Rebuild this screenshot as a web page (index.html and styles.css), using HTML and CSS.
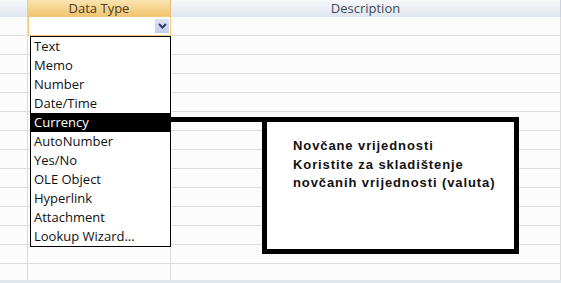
FILE: index.html
```html
<!DOCTYPE html>
<html lang="en">
<head>
  <meta charset="UTF-8">
  <title>Data Type</title>
  <link rel="stylesheet" href="styles.css">
</head>
<body>
  <div class="sheet">
    <div class="head">
      <div class="hcell corner"></div>
      <div class="hcell active">Data Type</div>
      <div class="hcell">Description</div>
    </div>

    <div class="row">
      <div class="cell"></div>
      <div class="cell current">
        <span class="drop">
          <svg width="9" height="6" viewBox="0 0 9 6"><path d="M1 1 L4.5 4.5 L8 1" fill="none" stroke="#2c3b6e" stroke-width="2"/></svg>
        </span>
      </div>
      <div class="cell"></div>
    </div>
    <div class="row"><div class="cell"></div><div class="cell"></div><div class="cell"></div></div>
    <div class="row"><div class="cell"></div><div class="cell"></div><div class="cell"></div></div>
    <div class="row"><div class="cell"></div><div class="cell"></div><div class="cell"></div></div>
    <div class="row"><div class="cell"></div><div class="cell"></div><div class="cell"></div></div>
    <div class="row"><div class="cell"></div><div class="cell"></div><div class="cell"></div></div>
    <div class="row"><div class="cell"></div><div class="cell"></div><div class="cell"></div></div>
    <div class="row"><div class="cell"></div><div class="cell"></div><div class="cell"></div></div>
    <div class="row"><div class="cell"></div><div class="cell"></div><div class="cell"></div></div>
    <div class="row"><div class="cell"></div><div class="cell"></div><div class="cell"></div></div>
    <div class="row"><div class="cell"></div><div class="cell"></div><div class="cell"></div></div>
    <div class="row"><div class="cell"></div><div class="cell"></div><div class="cell"></div></div>
    <div class="row"><div class="cell"></div><div class="cell"></div><div class="cell"></div></div>
    <div class="row last"><div class="cell"></div><div class="cell"></div><div class="cell"></div></div>
    <div class="footer"></div>

    <ul class="list">
      <li>Text</li>
      <li>Memo</li>
      <li>Number</li>
      <li>Date/Time</li>
      <li class="selected">Currency</li>
      <li>AutoNumber</li>
      <li>Yes/No</li>
      <li>OLE Object</li>
      <li>Hyperlink</li>
      <li>Attachment</li>
      <li>Lookup Wizard...</li>
    </ul>

    <div class="connector"></div>
    <div class="note">
      <p>Novčane vrijednosti</p>
      <p>Koristite za skladištenje</p>
      <p>novčanih vrijednosti (valuta)</p>
    </div>
  </div>
</body>
</html>
```

FILE: styles.css
```css
body {
  margin: 0;
  font-family: "Open Sans", "Noto Sans", sans-serif;
  background: #fcfcfc;
}
.sheet {
  position: relative;
  width: 561px;
  height: 283px;
  overflow: hidden;
}
.head, .row {
  display: grid;
  grid-template-columns: 28px 143px 1fr;
}
.head {
  height: 17px;
}
.hcell {
  background: linear-gradient(to bottom, #f7f9fb, #dfe5ee);
  border-right: 1px solid #c9d1dc;
  color: #3e4a5b;
  font-size: 13px;
  line-height: 17px;
  text-align: center;
}
.hcell.active {
  background: linear-gradient(to bottom, #fbe4b0, #f1c26c);
  border-right-color: #e8c27d;
  color: #4c3e22;
}
.row {
  height: 18px;
  border-bottom: 1px solid #dcdcdc;
}
.row.last {
  height: 16px;
  border-bottom: none;
}
.cell {
  border-right: 1px solid #dcdcdc;
}
.cell.current {
  border: 1px solid #f2c77e;
  margin-top: -1px;
  margin-bottom: -1px;
  display: flex;
  justify-content: flex-end;
  align-items: center;
  padding-right: 1px;
  background: #fff;
}
.drop {
  width: 14px;
  height: 14px;
  background: linear-gradient(to bottom, #dce3f5, #c3cdea);
  display: flex;
  align-items: center;
  justify-content: center;
}
.footer {
  height: 3px;
  background: #e1e6ec;
}
.list {
  position: absolute;
  left: 30px;
  top: 36px;
  width: 139px;
  margin: 0;
  padding: 0;
  list-style: none;
  background: #fff;
  border: 1px solid #000;
}
.list li {
  height: 19px;
  line-height: 19px;
  padding-left: 3px;
  font-size: 13px;
  color: #111;
}
.list li.selected {
  background: #000;
  color: #fff;
}
.connector {
  position: absolute;
  left: 170px;
  top: 117px;
  width: 94px;
  height: 5px;
  background: #000;
}
.note {
  position: absolute;
  left: 262px;
  top: 117px;
  width: 247px;
  height: 127px;
  border: 5px solid #000;
  background: #fff;
  font-family: "Liberation Sans", Arial, sans-serif;
  font-weight: bold;
  font-size: 13px;
  letter-spacing: 0.9px;
  color: #111;
}
.note p {
  margin: 0 0 0 26px;
  line-height: 18.5px;
}
.note p:first-child {
  margin-top: 15px;
}
```
